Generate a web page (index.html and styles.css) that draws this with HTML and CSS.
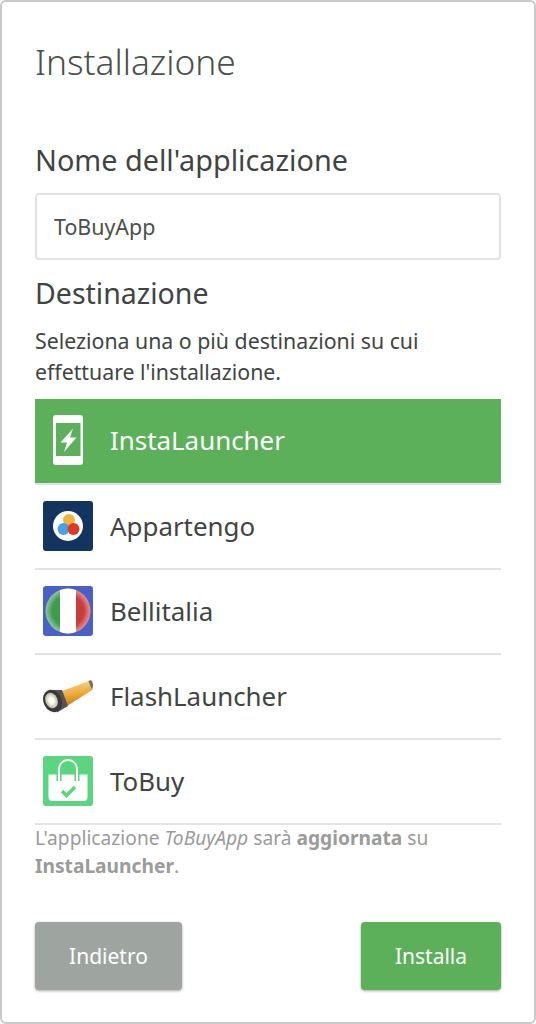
FILE: index.html
```html
<!DOCTYPE html>
<html lang="it">
<head>
    <meta charset="UTF-8">
    <meta name="viewport" content="width=device-width, initial-scale=1.0">
    <title>Installazione</title>
    <link rel="stylesheet" href="styles.css">
</head>
<body>
    <main class="dialog">
        <h1>Installazione</h1>
        <h2 class="name-title">Nome dell'applicazione</h2>
        <div class="name-input">ToBuyApp</div>
        <h2 class="dest-title">Destinazione</h2>
        <p class="intro">Seleziona una o più destinazioni su cui effettuare l'installazione.</p>
        <ul class="targets">
            <li class="target selected">
                <svg class="icon" viewBox="0 0 50 50">
                    <rect x="10" y="0" width="30" height="50" rx="3" fill="#fff"/>
                    <rect x="13" y="8" width="24.500" height="33" fill="#5cb05a"/>
                    <path d="M30 13.500 L17.500 27.500 H24 L21 37 L33.500 22.500 H27 Z" fill="#fff"/>
                </svg>
                <span>InstaLauncher</span>
            </li>
            <li class="target">
                <svg class="icon" viewBox="0 0 50 50">
                    <rect width="50" height="50" rx="3" fill="#13345f"/>
                    <circle cx="25" cy="25" r="15" fill="#fff"/>
                    <circle cx="26" cy="19" r="6" fill="#eeb540"/>
                    <circle cx="20.500" cy="28" r="6" fill="#4a9ff0"/>
                    <circle cx="30.500" cy="28" r="6" fill="#dd3a26"/>
                </svg>
                <span>Appartengo</span>
            </li>
            <li class="target">
                <svg class="icon" viewBox="0 0 50 50">
                    <defs>
                        <clipPath id="ball"><circle cx="25" cy="25" r="22.500"/></clipPath>
                        <radialGradient id="shine" cx="50%" cy="50%" r="50%">
                            <stop offset="70%" stop-color="#fff" stop-opacity="0"/>
                            <stop offset="100%" stop-color="#fff" stop-opacity=".45"/>
                        </radialGradient>
                    </defs>
                    <rect width="50" height="50" rx="3" fill="#4a5fc8"/>
                    <g clip-path="url(#ball)">
                        <rect width="18" height="50" fill="#3f9a50"/>
                        <rect x="17" width="16" height="50" fill="#fff"/>
                        <rect x="33" width="17" height="50" fill="#c93c3e"/>
                    </g>
                    <circle cx="25" cy="25" r="22.500" fill="url(#shine)"/>
                </svg>
                <span>Bellitalia</span>
            </li>
            <li class="target">
                <svg class="icon" viewBox="0 0 50 50">
                    <defs>
                        <linearGradient id="barrel" x1="0.2" y1="0" x2="0.4" y2="1">
                            <stop offset="0%" stop-color="#f9dc9a"/>
                            <stop offset="55%" stop-color="#eda93a"/>
                            <stop offset="100%" stop-color="#c97a18"/>
                        </linearGradient>
                        <radialGradient id="lens">
                            <stop offset="35%" stop-color="#fffdf2"/>
                            <stop offset="100%" stop-color="#bcb9a8"/>
                        </radialGradient>
                    </defs>
                    <path d="M19 20 L47 9.500 L50 18.500 L24 35 Z" fill="url(#barrel)"/>
                    <path d="M45.500 10 C47 8.500 49 9 49.500 11.500 C50.500 14 50 17 48.500 18 Z" fill="#77706a"/>
                    <path d="M7 19 L19 19 L25 35 L14 41.500 Z" fill="#55524f"/>
                    <ellipse cx="9.500" cy="30" rx="9" ry="11.500" transform="rotate(-24 9.500 30)" fill="#3a3a3a"/>
                    <ellipse cx="8.500" cy="29.500" rx="6" ry="8" transform="rotate(-24 8.500 29.500)" fill="url(#lens)"/>
                </svg>
                <span>FlashLauncher</span>
            </li>
            <li class="target">
                <svg class="icon" viewBox="0 0 50 50">
                    <rect width="50" height="50" rx="3" fill="#5bd580"/>
                    <path d="M5.500 18.500 H44.500 V41 A4 4 0 0 1 40.500 45 H9.500 A4 4 0 0 1 5.500 41 Z" fill="#fff"/>
                    <path d="M16 25 V13 A9 9 0 0 1 34 13 V25" fill="none" stroke="#5bd580" stroke-width="5"/>
                    <path d="M16 25 V13 A9 9 0 0 1 34 13 V25" fill="none" stroke="#fff" stroke-width="2"/>
                    <path d="M19 35 L23.500 39.500 L32 31" fill="none" stroke="#5bd580" stroke-width="3.500"/>
                </svg>
                <span>ToBuy</span>
            </li>
        </ul>
        <p class="hint">L'applicazione <em>ToBuyApp</em> sarà <strong>aggiornata</strong> su <strong>InstaLauncher</strong>.</p>
        <div class="actions">
            <button class="btn back">Indietro</button>
            <button class="btn install">Installa</button>
        </div>
    </main>
</body>
</html>
```

FILE: styles.css
```css
* {
    box-sizing: border-box;
}
body {
    margin: 0;
    font-family: "Noto Sans", sans-serif;
    background-color: #fff;
    color: #3f4542;
}
.dialog {
    width: 536px;
    height: 1024px;
    padding: 0 33px;
    border: 2px solid #c9c9c9;
    border-radius: 6px;
    overflow: hidden;
}
h1 {
    margin: 35px 0 0;
    height: 48px;
    font-size: 35.3px;
    line-height: 48px;
    font-weight: 300;
    color: #4b504d;
}
h2 {
    margin: 0;
    font-weight: 400;
}
.name-title {
    margin-top: 55px;
    height: 40px;
    font-size: 28.8px;
    line-height: 40px;
}
.name-input {
    margin-top: 13px;
    height: 67px;
    padding-left: 17px;
    border: 2px solid #e3e3e3;
    border-radius: 4px;
    font-size: 21.4px;
    line-height: 63px;
    color: #4a4f4c;
}
.dest-title {
    margin-top: 13px;
    height: 40px;
    font-size: 28.5px;
    line-height: 40px;
}
.intro {
    margin: 12px 0 0;
    font-size: 21.3px;
    line-height: 31px;
}
.targets {
    list-style: none;
    margin: 12px 0 0;
    padding: 0;
}
.target {
    display: flex;
    align-items: center;
    gap: 17px;
    height: 85px;
    padding-left: 8px;
    padding-bottom: 2px;
    border-bottom: 2px solid #e3e3e3;
    font-size: 25.9px;
}
.target.selected {
    height: 86px;
    background-color: #5cb05a;
    color: #fff;
}
.icon {
    width: 50px;
    height: 50px;
    flex: none;
}
.hint {
    margin: -1px 0 0;
    font-size: 19.2px;
    line-height: 28px;
    color: #9b9b9b;
}
.actions {
    display: flex;
    justify-content: space-between;
    margin-top: 42px;
}
.btn {
    height: 68px;
    border: 0;
    border-radius: 4px;
    box-shadow: 0 1px 3px rgba(0, 0, 0, 0.35);
    font-family: inherit;
    font-size: 21px;
    color: #fff;
}
.back {
    width: 147px;
    background-color: #9ea5a0;
}
.install {
    width: 140px;
    background-color: #5cb05a;
}
```
